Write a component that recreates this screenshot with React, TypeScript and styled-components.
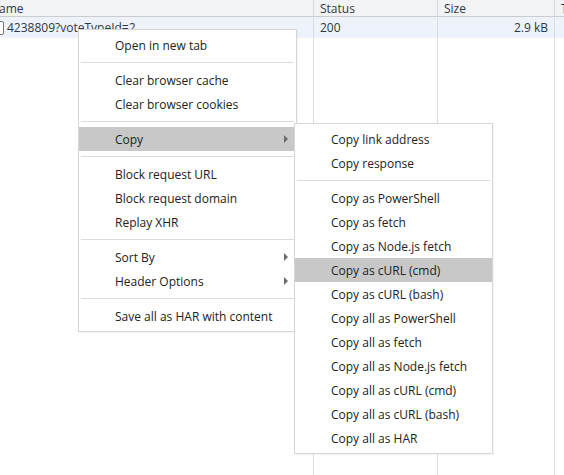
import React from "react";
import styled, { createGlobalStyle } from "styled-components";

const GlobalStyle = createGlobalStyle`
  html, body {
    margin: 0;
    padding: 0;
    background: #fff;
  }
  body {
    font-family: "Open Sans", "Noto Sans", sans-serif;
    font-size: 12px;
    color: #333;
  }
`;

const Page = styled.div`
  position: relative;
  width: 564px;
  height: 475px;
  overflow: hidden;
  background: #fff;
`;

// the grid is scrolled a little to the left, as in the devtools panel
const Table = styled.div`
  display: grid;
  grid-template-columns: 330px 124px 117px 40px;
  grid-template-rows: 17px 21px 437px;
  margin-left: -16px;
`;

const Cell = styled.div<{ $head?: boolean; $row?: boolean; $right?: boolean }>`
  display: flex;
  align-items: center;
  justify-content: ${(p) => (p.$right ? "flex-end" : "flex-start")};
  padding: 0 6px;
  border-right: 1px solid #dadce0;
  border-bottom: ${(p) => (p.$head ? "1px solid #cbcdd1" : "none")};
  background: ${(p) => (p.$head ? "#f1f3f4" : p.$row ? "#eef3fb" : "#fff")};
  color: #303942;
  white-space: nowrap;
  overflow: hidden;
  font-size: 12px;
`;

const Check = styled.span`
  width: 12px;
  height: 12px;
  border: 1px solid #767676;
  border-radius: 2px;
  background: #fff;
  margin: 0 3px 0 0;
  flex: none;
`;

const Menu = styled.div<{ $x: number; $y: number; $w: number }>`
  position: absolute;
  left: ${(p) => p.$x}px;
  top: ${(p) => p.$y}px;
  width: ${(p) => p.$w}px;
  padding: 3px 0;
  background: #fff;
  border: 1px solid #d6d6d6;
  box-sizing: border-box;
  box-shadow: 1px 1px 2px rgba(0, 0, 0, 0.05);
`;

const Item = styled.div<{ $active?: boolean }>`
  position: relative;
  display: flex;
  align-items: center;
  height: 24px;
  padding-left: 36px;
  background: ${(p) => (p.$active ? "#c8c8c8" : "transparent")};
  color: #222;
  font-size: 12px;
  white-space: nowrap;
`;

const Arrow = styled.span`
  position: absolute;
  right: 8px;
  top: 8px;
  width: 0;
  height: 0;
  border-top: 4px solid transparent;
  border-bottom: 4px solid transparent;
  border-left: 4px solid #6b6b6b;
`;

const Separator = styled.div`
  height: 1px;
  margin: 5px 2px;
  background: #dcdcdc;
`;

type Entry = { label: string; active?: boolean; sub?: boolean } | "sep";

const mainMenu: Entry[] = [
  { label: "Open in new tab" },
  "sep",
  { label: "Clear browser cache" },
  { label: "Clear browser cookies" },
  "sep",
  { label: "Copy", active: true, sub: true },
  "sep",
  { label: "Block request URL" },
  { label: "Block request domain" },
  { label: "Replay XHR" },
  "sep",
  { label: "Sort By", sub: true },
  { label: "Header Options", sub: true },
  "sep",
  { label: "Save all as HAR with content" },
];

const copyMenu: Entry[] = [
  { label: "Copy link address" },
  { label: "Copy response" },
  "sep",
  { label: "Copy as PowerShell" },
  { label: "Copy as fetch" },
  { label: "Copy as Node.js fetch" },
  { label: "Copy as cURL (cmd)", active: true },
  { label: "Copy as cURL (bash)" },
  { label: "Copy all as PowerShell" },
  { label: "Copy all as fetch" },
  { label: "Copy all as Node.js fetch" },
  { label: "Copy all as cURL (cmd)" },
  { label: "Copy all as cURL (bash)" },
  { label: "Copy all as HAR" },
];

const renderEntries = (entries: Entry[]) =>
  entries.map((e, i) =>
    e === "sep" ? (
      <Separator key={i} />
    ) : (
      <Item key={i} $active={e.active}>
        {e.label}
        {e.sub && <Arrow />}
      </Item>
    )
  );

export default function App() {
  return (
    <Page>
      <GlobalStyle />
      <Table>
        <Cell $head>Name</Cell>
        <Cell $head>Status</Cell>
        <Cell $head>Size</Cell>
        <Cell $head>Time</Cell>

        <Cell $row>
          <Check />
          4238809?voteTypeId=2
        </Cell>
        <Cell $row>200</Cell>
        <Cell $row $right>2.9 kB</Cell>
        <Cell $row />

        <Cell />
        <Cell />
        <Cell />
        <Cell />
      </Table>

      <Menu $x={78} $y={29} $w={219}>
        {renderEntries(mainMenu)}
      </Menu>
      <Menu $x={294} $y={123} $w={199}>
        {renderEntries(copyMenu)}
      </Menu>
    </Page>
  );
}
